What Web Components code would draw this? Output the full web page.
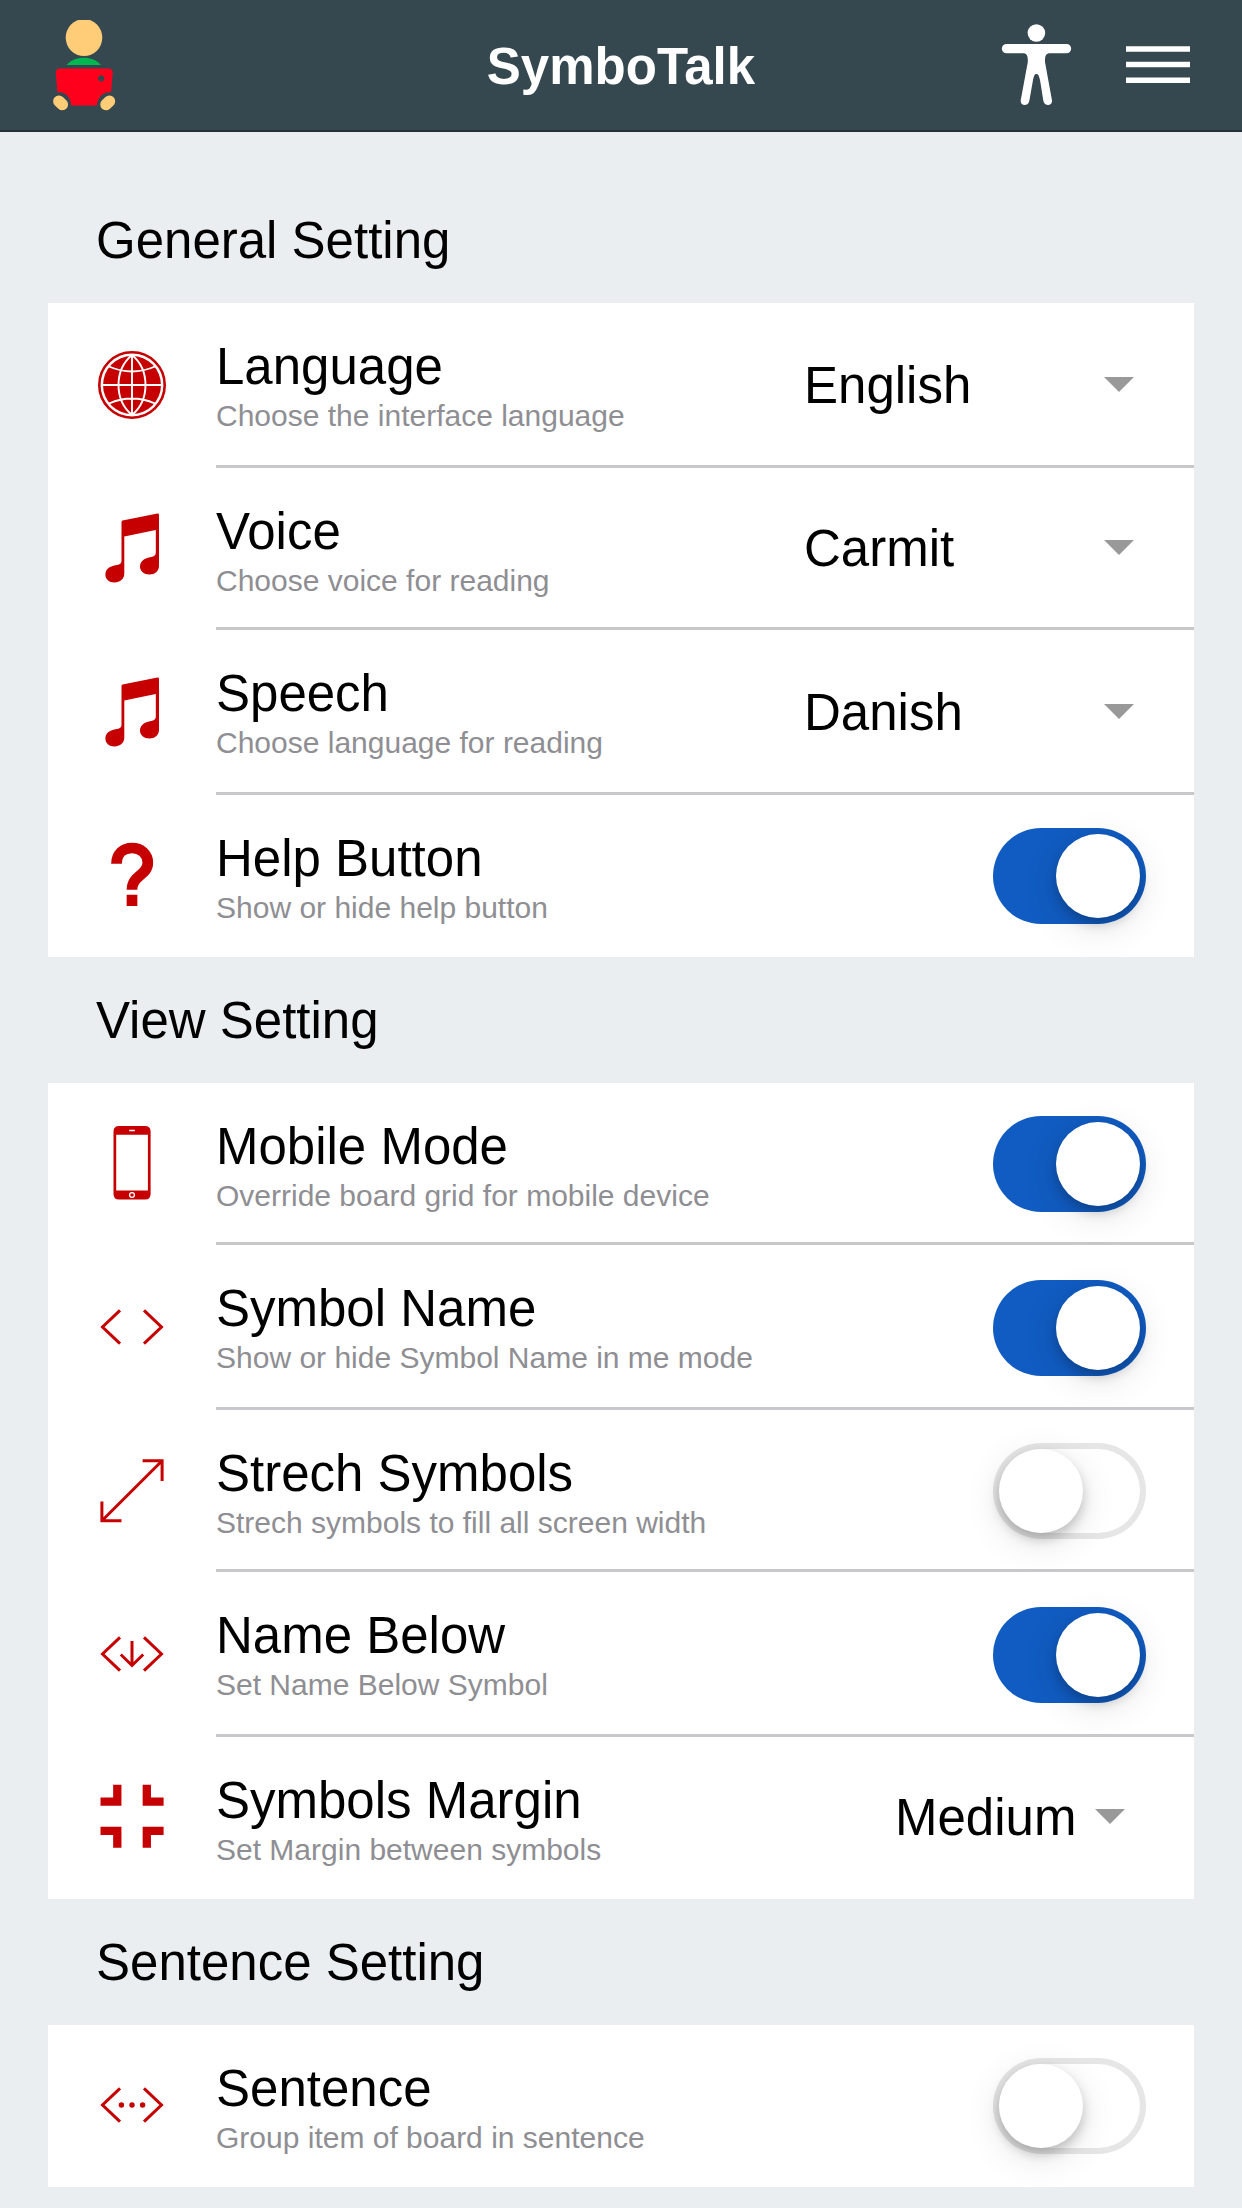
<!DOCTYPE html>
<html lang="en">
<head>
<meta charset="utf-8">
<meta name="viewport" content="width=device-width, initial-scale=1">
<title>SymboTalk</title>
<style>
  body {
    margin: 0;
    background: #eaeef1;
    color: #000;
    font-family: "Liberation Sans", Arial, sans-serif;
    font-size: 51px;
  }
  main { display: block; padding: 45px 48px 21px; }
</style>
</head>
<body>

<template id="app-header-tpl">
  <style>
    :host { display: block; background: #35474f; color: #fff; box-shadow: inset 0 -2px 0 #253038; }
    header { display: grid; grid-template-columns: 1fr auto 1fr; align-items: center; padding: 0 52px; }
    h1 { margin: 0; padding-top: 2px; font-size: 51px; line-height: 130px; font-weight: bold; }
    nav { display: flex; justify-content: flex-end; gap: 52px; }
    a, button, svg { display: block; }
    a { justify-self: start; }
    button { margin: 0; padding: 0; border: 0; background: none; color: inherit; }
  </style>
  <header>
    <a href="#home" aria-label="Home">
      <svg width="64" height="92" viewBox="52 20 64 92">
        <ellipse cx="84" cy="37.6" rx="18.3" ry="18.5" fill="#ffcc77"/>
        <path d="M66.5 65C75 55.3 92.500 55.3 101 65z" fill="#00b84f"/>
        <path fill="#ff001c" fill-rule="evenodd" d="M60 68.400H108.500Q112.900 68.400 112.700 73L111 92.300H107.500C101 93.500 97.500 99 96.900 105.600H71.200C71 99 67.500 93.500 61 92.300H57.400L55.800 73Q55.600 68.400 60 68.400zM101.200 75.200a3.200 3.200 0 1 0 .01 0z"/>
        <path d="M58.900 101.300L62.300 104.500M109.400 101.300L106 104.500" stroke="#ffcc77" stroke-width="11.500" stroke-linecap="round"/>
      </svg>
    </a>
    <h1><slot></slot></h1>
    <nav>
      <button type="button" aria-label="Accessibility">
        <svg width="74" height="92" viewBox="1000 20 74 92" fill="#fff">
          <circle cx="1036.400" cy="33" r="8.800"/>
          <path d="M1006.500 44H1066.500A4.600 4.600 0 0 1 1066.500 53.300H1050C1046 53.300 1044.800 56 1045 62L1052 100.500C1052.500 106.500 1044 106.500 1043.300 100.500L1040 80C1039 75.500 1038 74 1036.400 74S1034 75.500 1033 80L1029.400 100.500C1028.700 106.500 1020.200 106.500 1020.700 100.500L1027.800 62C1028 56 1027 53.300 1023 53.300H1006.500A4.600 4.600 0 0 1 1006.500 44z"/>
        </svg>
      </button>
      <button type="button" aria-label="Menu">
        <svg width="64" height="92" viewBox="1126 20 64 92" stroke="#fff" stroke-width="5.500">
          <path d="M1126 48.900H1190M1126 64.600H1190M1126 80.200H1190"/>
        </svg>
      </button>
    </nav>
  </header>
</template>

<template id="setting-group-tpl">
  <style>
    :host { display: block; }
    h2 { margin: 0; padding: 2px 48px 0; font-size: 51px; line-height: 124px; font-weight: normal; }
    .rows { display: grid; grid-auto-rows: 162px 165px; background: #fff; }
    :host([tall-first]) .rows { grid-auto-rows: 165px 162px; }
  </style>
  <section>
    <h2></h2>
    <div class="rows"><slot></slot></div>
  </section>
</template>

<template id="setting-row-tpl">
  <style>
    :host { display: grid; grid-template-columns: 168px 1fr; }
    .icon { display: grid; align-items: center; padding-left: 42px; color: #c60000; }
    .body { display: flex; align-items: center; justify-content: space-between; box-shadow: inset 0 -3px 0 #c8c7cc; min-width: 0; }
    :host(:last-of-type) .body { box-shadow: none; }
    label { align-self: flex-start; padding-top: 34px; flex: 1; min-width: 0; }
    .title, .note { display: block; white-space: nowrap; }
    .title { font-size: 51px; line-height: 60px; }
    .note { font-size: 30px; line-height: 38px; color: #8e8e93; }
    .control { flex: none; }
    .pick { display: grid; align-items: center; width: 332px; margin-right: 60px; }
    .pick.compact { width: 230px; margin-right: 69px; }
    .pick > * { grid-area: 1 / 1; }
    .pick svg { justify-self: end; margin-bottom: 3px; pointer-events: none; }
    select { appearance: none; width: 100%; margin: 0; padding: 0 0 0 2px; border: 0; border-radius: 0; background: none; color: #000; font: inherit; font-size: 51px; line-height: 60px; }
    .compact select { padding-left: 0; }
    input { appearance: none; display: block; box-sizing: border-box; width: 153px; height: 96px; margin: 0 48px 0 0; padding: 6px; border-radius: 48px; background: #fff; box-shadow: inset 0 0 0 6px #e6e6e6; }
    input::before { content: ""; display: block; width: 84px; height: 84px; border-radius: 50%; background: #fff; box-shadow: 0 9px 36px rgba(0,0,0,.12), 0 6px 12px rgba(0,0,0,.2); }
    input:checked { background: #115cc2; box-shadow: none; }
    input:checked::before { margin-left: 57px; }
  </style>
  <div class="icon"><slot></slot></div>
  <div class="body">
    <label for="control"><span class="title"></span><span class="note"></span></label>
    <div class="control"></div>
  </div>
</template>

<template id="setting-icon-tpl">
  <style>
    :host { display: block; }
    svg { display: block; width: 84px; height: 84px; fill: none; stroke: currentColor; stroke-width: 3; }
    .solid { fill: currentColor; stroke: none; }
  </style>
</template>

<app-header>SymboTalk</app-header>
<main>
  <setting-group heading="General Setting" tall-first>
    <setting-row heading="Language" note="Choose the interface language" options="English,Hebrew,Danish"><setting-icon name="globe"></setting-icon></setting-row>
    <setting-row heading="Voice" note="Choose voice for reading" options="Carmit,Samantha"><setting-icon name="music"></setting-icon></setting-row>
    <setting-row heading="Speech" note="Choose language for reading" options="Danish,English,Hebrew"><setting-icon name="music"></setting-icon></setting-row>
    <setting-row heading="Help Button" note="Show or hide help button" checked><setting-icon name="help"></setting-icon></setting-row>
  </setting-group>
  <setting-group heading="View Setting">
    <setting-row heading="Mobile Mode" note="Override board grid for mobile device" checked><setting-icon name="phone"></setting-icon></setting-row>
    <setting-row heading="Symbol Name" note="Show or hide Symbol Name in me mode" checked><setting-icon name="code"></setting-icon></setting-row>
    <setting-row heading="Strech Symbols" note="Strech symbols to fill all screen width"><setting-icon name="expand"></setting-icon></setting-row>
    <setting-row heading="Name Below" note="Set Name Below Symbol" checked><setting-icon name="code-down"></setting-icon></setting-row>
    <setting-row heading="Symbols Margin" note="Set Margin between symbols" options="Medium,Small,Large" compact><setting-icon name="contract"></setting-icon></setting-row>
  </setting-group>
  <setting-group heading="Sentence Setting">
    <setting-row heading="Sentence" note="Group item of board in sentence"><setting-icon name="code-dots"></setting-icon></setting-row>
  </setting-group>
</main>

<script>
  const stamp = (host, id) => {
    const root = host.attachShadow({ mode: 'open' });
    root.append(document.getElementById(id).content.cloneNode(true));
    return root;
  };

  const CHEVRONS = '<path d="M30 25.300L12.500 42L30 58.700M54 25.300L71.500 42L54 58.700"/>';
  const ICONS = {
    'globe': '<circle cx="42" cy="42" r="32.700" stroke-width="2.600"/><circle class="solid" cx="42" cy="42" r="29"/><path stroke="#fff" stroke-width="1.900" d="M42 13V71M13 42H71M42 12C24 27 24 57 42 72M42 12C60 27 60 57 42 72M19 23.500Q42 33.500 65 23.500M19 60.500Q42 50.500 65 60.500"/>',
    'music': '<path class="solid" d="M32.500 14.500L67.500 7.400Q69 7.200 69 8.800V60C69 65 64.500 68.500 59.500 68.500C54 68.500 50 65 50 60.500C50 55.500 54 52.200 60 51.200C64.500 50.400 65.800 49.500 65.800 46V24L34.300 30.500V67.500C34.300 73 30 76.500 24.500 76.500C19 76.500 15.400 73 15.400 68.500C15.400 63.500 19.500 60.300 25.500 59.300C30 58.500 31.500 57.500 31.500 54.500V16Q31.500 14.700 32.500 14.500z"/>',
    'help': '<path stroke-width="10.700" d="M26.500 30.700C26.500 21 33 15 42 15S57.800 21 57.800 29.700C57.800 42.500 42 42 42 56.700M42 61.700V73"/>',
    'phone': '<path class="solid" fill-rule="evenodd" d="M29 5H55Q60.600 5 60.600 10.500V73Q60.600 78.600 55 78.600H29Q23.500 78.600 23.500 73V10.500Q23.500 5 29 5zM26.200 13.700V69.600H57.900V13.700zM39.200 8.700V10.300H44.900V8.700z"/><circle cx="42" cy="74" r="2.400" stroke="#fff" stroke-width="1.300"/>',
    'code': CHEVRONS,
    'code-down': CHEVRONS + '<path d="M42 29V53M30.800 42.500L42 53.500L53.200 42.500"/>',
    'code-dots': CHEVRONS + '<g class="solid"><circle cx="31.400" cy="42" r="2.700"/><circle cx="42" cy="42" r="2.700"/><circle cx="52.600" cy="42" r="2.700"/></g>',
    'expand': '<path d="M52.600 12.800H72.100V33M72.100 12.800L11.900 72.800M11.900 53.500V72.800H31.500"/>',
    'contract': '<path stroke-width="8.300" d="M10.500 26.700H27.300V9.700M73.600 26.700H56.800V9.700M10.500 55.800H27.300V72.700M73.600 55.800H56.800V72.700"/>'
  };

  customElements.define('app-header', class extends HTMLElement {
    connectedCallback() { if (!this.shadowRoot) stamp(this, 'app-header-tpl'); }
  });

  customElements.define('setting-group', class extends HTMLElement {
    connectedCallback() {
      if (this.shadowRoot) return;
      stamp(this, 'setting-group-tpl').querySelector('h2').textContent = this.getAttribute('heading');
    }
  });

  customElements.define('setting-icon', class extends HTMLElement {
    connectedCallback() {
      if (this.shadowRoot) return;
      stamp(this, 'setting-icon-tpl').querySelector('style').insertAdjacentHTML('afterend',
        `<svg viewBox="0 1 84 84" aria-hidden="true">${ICONS[this.getAttribute('name')]}</svg>`);
    }
  });

  customElements.define('setting-row', class extends HTMLElement {
    connectedCallback() {
      if (this.shadowRoot) return;
      const root = stamp(this, 'setting-row-tpl');
      root.querySelector('.title').textContent = this.getAttribute('heading');
      root.querySelector('.note').textContent = this.getAttribute('note');
      const control = root.querySelector('.control');
      if (this.hasAttribute('options')) {
        control.classList.add('pick');
        control.classList.toggle('compact', this.hasAttribute('compact'));
        const select = document.createElement('select');
        select.id = 'control';
        for (const name of this.getAttribute('options').split(',')) select.add(new Option(name));
        control.append(select);
        control.insertAdjacentHTML('beforeend', '<svg width="30" height="15" viewBox="0 0 30 15" aria-hidden="true"><path d="M0 0H30L15 15z" fill="#999"/></svg>');
      } else {
        const input = document.createElement('input');
        input.type = 'checkbox';
        input.id = 'control';
        input.checked = this.hasAttribute('checked');
        control.append(input);
      }
    }
  });
</script>
</body>
</html>
